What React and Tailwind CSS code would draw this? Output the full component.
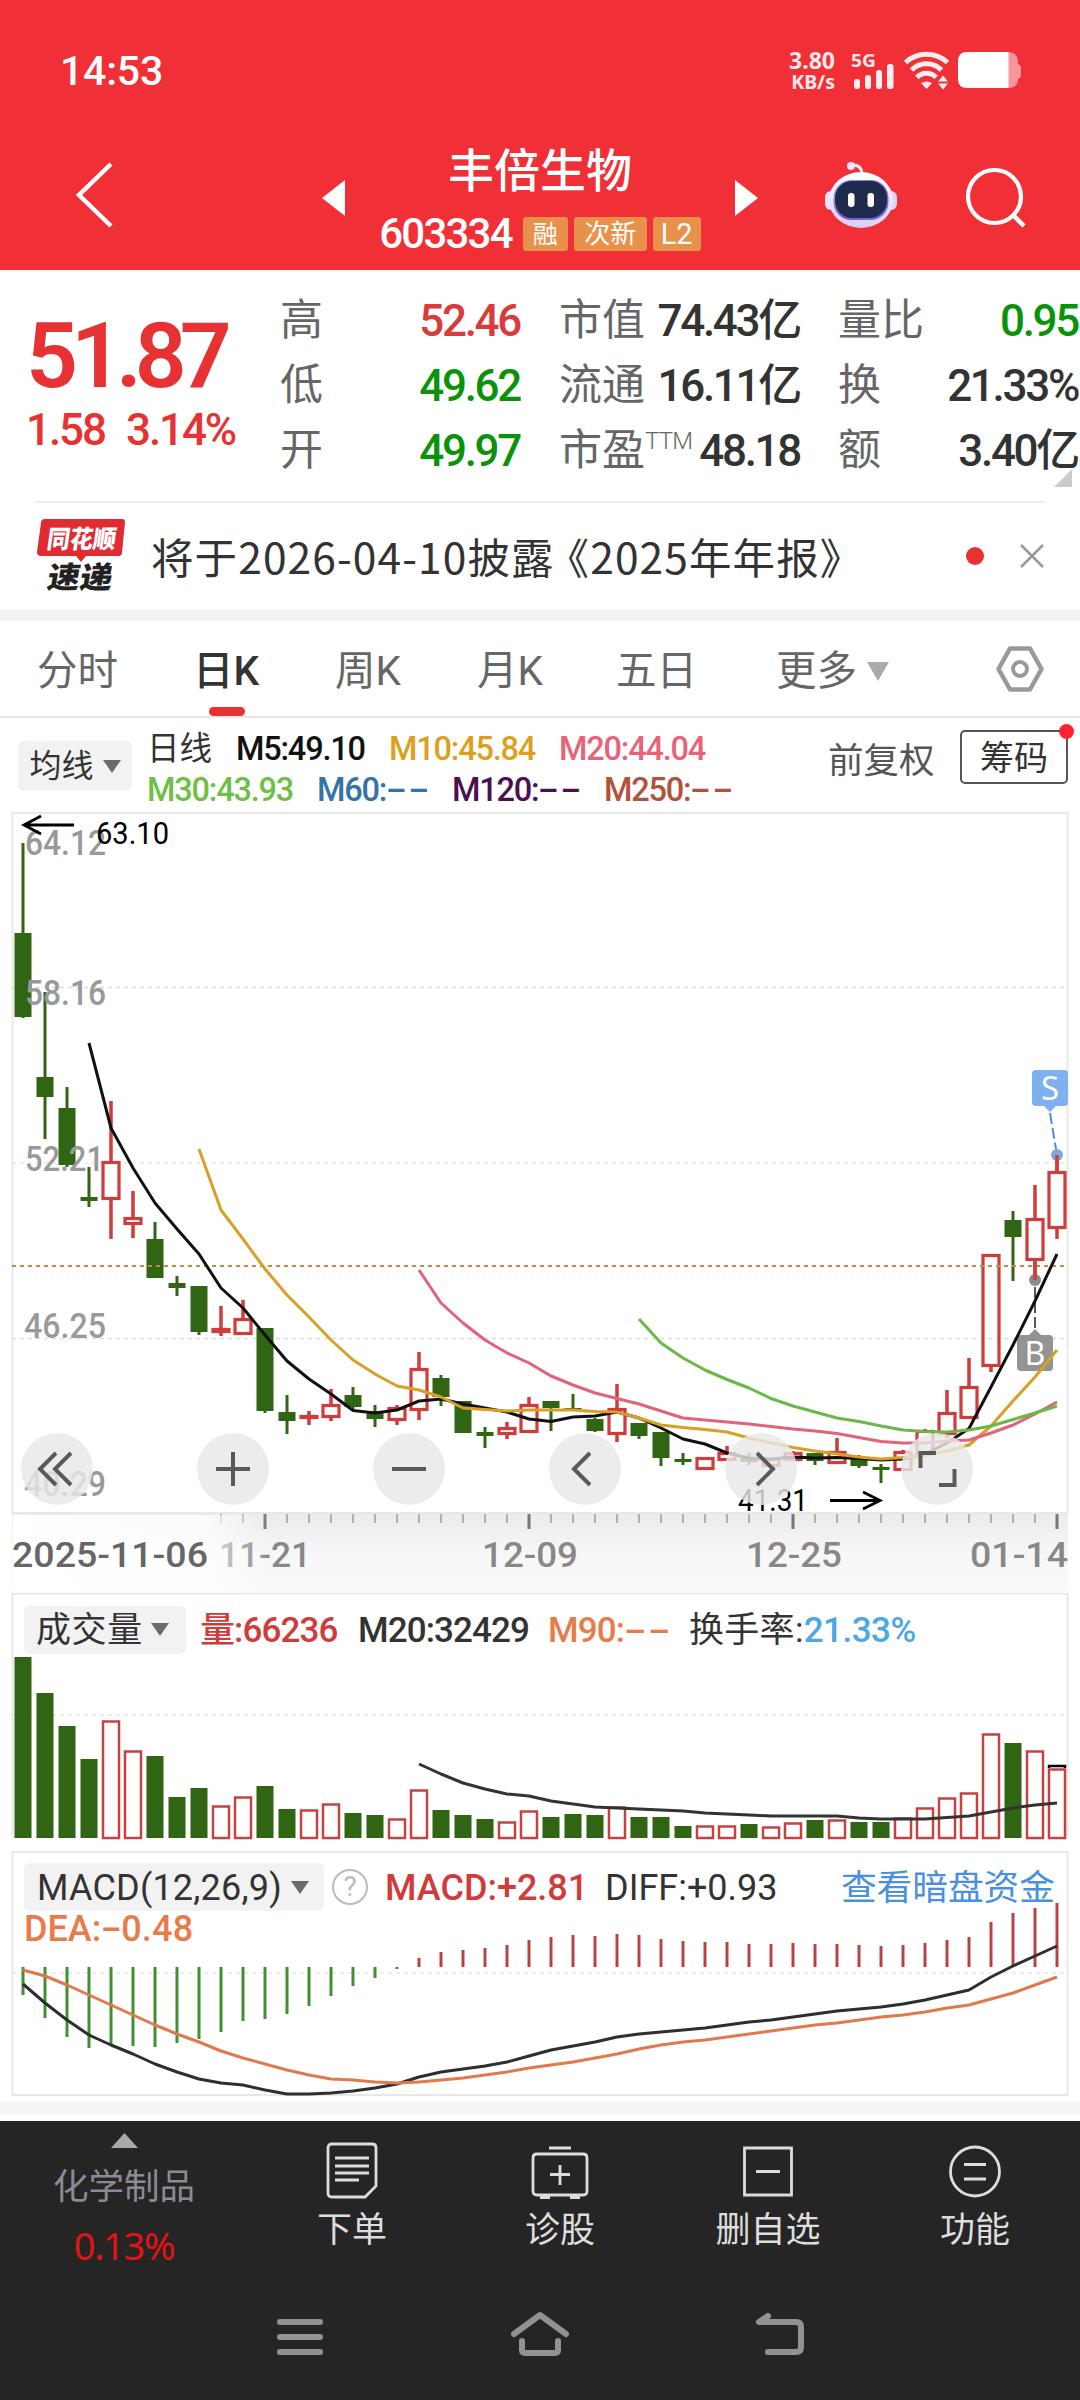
import React from 'react';

// one entry per trading day: [body top, body bottom, high, low, up?]
const candles = [
    [933, 1017, 843, 1018, 0], [1077, 1097, 992, 1139, 0], [1108, 1165, 1087, 1167, 0], [1197, 1201, 1167, 1207, 0],
    [1161, 1200, 1101, 1239, 1], [1217, 1225, 1191, 1238, 1], [1239, 1278, 1222, 1278, 0], [1283, 1288, 1276, 1296, 0],
    [1286, 1332, 1286, 1335, 0], [1328, 1333, 1306, 1336, 1], [1318, 1335, 1300, 1335, 1], [1328, 1411, 1328, 1413, 0],
    [1412, 1421, 1395, 1434, 0], [1415, 1419, 1411, 1425, 1], [1404, 1418, 1389, 1421, 1], [1395, 1407, 1387, 1409, 0],
    [1411, 1419, 1405, 1427, 0], [1407, 1421, 1405, 1425, 1], [1368, 1411, 1352, 1420, 1], [1378, 1397, 1375, 1406, 0],
    [1401, 1433, 1401, 1433, 0], [1432, 1436, 1427, 1448, 0], [1427, 1435, 1422, 1439, 1], [1404, 1433, 1397, 1433, 1],
    [1401, 1408, 1401, 1431, 0], [1408, 1410, 1394, 1411, 0], [1419, 1431, 1418, 1432, 0], [1408, 1435, 1384, 1442, 1],
    [1423, 1436, 1423, 1439, 0], [1432, 1458, 1432, 1466, 0], [1459, 1462, 1453, 1465, 0], [1457, 1470, 1457, 1470, 1],
    [1452, 1461, 1446, 1461, 1], [1457, 1462, 1453, 1465, 0], [1458, 1467, 1458, 1467, 1], [1452, 1461, 1451, 1461, 1],
    [1453, 1461, 1453, 1465, 0], [1451, 1464, 1438, 1464, 1], [1458, 1466, 1455, 1468, 0], [1467, 1470, 1464, 1483, 0],
    [1451, 1471, 1450, 1471, 1], [1430, 1454, 1429, 1454, 1], [1412, 1435, 1390, 1438, 1], [1386, 1419, 1358, 1419, 1],
    [1254, 1367, 1254, 1372, 1], [1220, 1237, 1211, 1281, 0], [1218, 1261, 1185, 1280, 1], [1171, 1229, 1155, 1239, 1],
];

const volumes = [
    1657, 1693, 1726, 1759, 1720, 1750, 1756, 1797, 1788, 1805, 1796, 1786, 1809, 1809, 1803, 1813,
    1815, 1818, 1789, 1810, 1815, 1819, 1821, 1810, 1817, 1814, 1815, 1806, 1817, 1817, 1826, 1825,
    1825, 1824, 1826, 1822, 1820, 1819, 1822, 1822, 1817, 1807, 1797, 1792, 1733, 1743, 1750, 1768,
];

const macd = [
    1995, 2018, 2037, 2048, 2045, 2046, 2047, 2043, 2039, 2032, 2021, 2019, 2014, 2006, 1996, 1986,
    1978, 1969, 1958, 1952, 1950, 1948, 1945, 1940, 1937, 1935, 1936, 1934, 1935, 1939, 1941, 1942,
    1942, 1944, 1944, 1943, 1944, 1944, 1945, 1946, 1945, 1943, 1940, 1937, 1922, 1913, 1908, 1903,
];

const ma5 = [1043, 1128, 1168, 1203, 1229, 1254, 1288, 1308, 1335, 1361, 1379, 1394, 1410.5, 1413, 1410, 1401, 1399, 1404, 1408, 1412, 1419, 1421.5, 1417, 1416, 1412, 1418, 1428, 1439, 1444, 1453, 1458, 1459, 1457, 1458, 1457.5, 1458.5, 1460, 1459, 1454, 1443, 1428.5, 1387, 1345, 1301, 1254];
const ma10 = [1149, 1210, 1239, 1269, 1295, 1317, 1340, 1360, 1374, 1386, 1390, 1397, 1408, 1409.5, 1411, 1410, 1410, 1410, 1411.5, 1412, 1418, 1425, 1427.5, 1429.5, 1432, 1438, 1443, 1447.5, 1451, 1454, 1457, 1459, 1457.5, 1455.5, 1451, 1445, 1426, 1401, 1377, 1350];
const ma20 = [1270, 1303, 1323, 1340, 1353, 1363, 1376, 1385, 1393, 1398.5, 1404, 1411, 1418, 1420, 1422, 1424, 1426.5, 1429, 1431, 1433.5, 1437.5, 1441.5, 1443, 1443, 1441, 1440, 1433, 1425, 1414, 1402];
const ma30 = [1319, 1343, 1358, 1370, 1379.5, 1388, 1398.5, 1406, 1412, 1418, 1421.5, 1426, 1430, 1431.5, 1432, 1430, 1426, 1419.5, 1413, 1406];
const volMa = [1764, 1774, 1783, 1789, 1794, 1796, 1801, 1804, 1807, 1808, 1809, 1810, 1811, 1813, 1814, 1815, 1816, 1816, 1816, 1816, 1818, 1819, 1819, 1819, 1817.5, 1816, 1812, 1808, 1805, 1803];
const diff = [1984, 2003, 2020, 2035, 2045, 2054, 2064, 2072, 2079, 2083, 2085, 2090, 2094, 2094, 2093, 2091, 2088, 2084, 2077, 2072, 2069, 2066, 2062, 2056, 2050, 2046, 2042, 2037, 2034, 2032, 2030, 2028, 2025, 2022, 2020, 2017, 2014, 2011, 2009, 2007, 2004, 2000, 1995, 1990, 1977, 1966, 1956, 1946];
const dea = [1970, 1976, 1985, 1995, 2005, 2015, 2025, 2034, 2042, 2051, 2058, 2064, 2070, 2075, 2079, 2080, 2082, 2083, 2082, 2080, 2078, 2075, 2072, 2068, 2065, 2062, 2058, 2054, 2049, 2045, 2042, 2040, 2037, 2034, 2031, 2028, 2025, 2023, 2020, 2017, 2015, 2012, 2008, 2005, 1999, 1993, 1985, 1977];

const GREEN = '#306613';
const RED = '#d13b3b';

const px = (i) => 23 + 22 * i;

function Line({ data, start = 0, color }) {
    const points = data.map((y, i) => `${px(start + i)},${y}`).join(' ');
    return <polyline points={points} fill="none" stroke={color} strokeWidth="3" strokeLinejoin="round" />;
}

function Label({ x, y, w, size = 35, fill = '#999', weight = 500, children }) {
    return (
        <text x={x} y={y} textLength={w} lengthAdjust="spacingAndGlyphs" fontSize={size} fontWeight={weight} fill={fill}>
            {children}
        </text>
    );
}

function Grid({ y, color = '#e6e6e6' }) {
    return <line x1="12" x2="1067" y1={y} y2={y} stroke={color} strokeWidth="1.5" strokeDasharray="4 4" />;
}

function Caret({ className = 'text-[#6b6b6b]' }) {
    return (
        <svg width="18" height="13" viewBox="0 0 18 13" className={className}>
            <path d="M0 0h18l-9 13z" fill="currentColor" />
        </svg>
    );
}

// wide dashes for averages that have no value yet
function Empty() {
    return <span className="inline-block origin-left scale-x-[1.9] tracking-[0.8px]">--</span>;
}

function RoundButton({ x, children }) {
    return (
        <g>
            <circle cx={x} cy="1469" r="36" fill="#e8e8e8" fillOpacity="0.82" />
            <g fill="none" stroke="#5a5a5a" strokeWidth="4">{children}</g>
        </g>
    );
}

function StatusBar() {
    return (
        <div className="flex h-[142px] items-center justify-between pl-[60px] pr-[59px]">
            <span className="text-[41px] font-medium leading-none tracking-[-0.2px]">14:53</span>
            <div className="flex items-center">
                <div className="mr-[14px] flex flex-col items-end font-['Noto_Sans',sans-serif] font-bold leading-[22px] text-white/90">
                    <span className="text-[23px]">3.80</span>
                    <span className="text-[19.500px]">KB/s</span>
                </div>
                <svg width="175" height="48" viewBox="848 46 175 48" className="-mr-[3px] -mt-[4px]">
                    <text x="850" y="67.500" fontSize="18.500" fontWeight="700" textLength="25" lengthAdjust="spacingAndGlyphs" fill="#fff" fillOpacity=".92" className="font-['Noto_Sans',sans-serif]">5G</text>
                    <g fill="#ffeef0">
                        <rect x="853" y="80" width="6" height="10" rx="2.500" />
                        <rect x="864" y="76" width="6" height="14" rx="2.500" />
                        <rect x="875" y="71" width="6" height="19" rx="2.500" />
                        <rect x="886" y="65" width="6.500" height="25" rx="2.500" />
                    </g>
                    <g fill="none" stroke="#ffeef0" strokeWidth="5">
                        <path d="M904.500 63.500a31 31 0 0 1 42 0" />
                        <path d="M910.500 71a21 21 0 0 1 30 0" />
                        <path d="M916 78.500a13 13 0 0 1 19 0" />
                    </g>
                    <path d="M920 84q5.500-3 11 0l-5.500 6zM937 82.500l5-6 5 6zM937 84.500h10l-5 6z" fill="#ffeef0" />
                    <path d="M1003 53h4q10 0 10 10v2q3 1 3 4v7q0 3-3 4v0q0 9-10 9h-4z" fill="#fff" fillOpacity=".5" />
                    <path d="M966 53h41.500v36H966q-9 0-9-9V62q0-9 9-9z" fill="#fff" />
                </svg>
            </div>
        </div>
    );
}

function Robot() {
    return (
        <svg width="76" height="72" viewBox="823 158 76 72">
            <defs>
                <linearGradient id="face" x1="0" y1="0" x2="0" y2="1">
                    <stop offset="0" stopColor="#fff" />
                    <stop offset="1" stopColor="#d6d0f4" />
                </linearGradient>
                <linearGradient id="rim" x1="0" y1="0" x2="1" y2="1">
                    <stop offset="0" stopColor="#7fc7d8" />
                    <stop offset=".5" stopColor="#8a4fd0" />
                    <stop offset="1" stopColor="#6a6fe8" />
                </linearGradient>
            </defs>
            <path d="M862 173q-1-8-9-8" fill="none" stroke="#f3e9fb" strokeWidth="3" />
            <circle cx="851" cy="166" r="4" fill="#f6e6f4" />
            <rect x="825" y="191" width="12" height="19" rx="6" fill="#e2e4fa" />
            <rect x="885" y="191" width="12" height="19" rx="6" fill="#dcd6f6" />
            <ellipse cx="861" cy="200" rx="32" ry="28" fill="url(#face)" />
            <rect x="833.500" y="180" width="55" height="40" rx="18" fill="url(#rim)" />
            <rect x="835" y="181" width="52" height="37" rx="17" fill="#202a4c" />
            <rect x="848" y="193" width="6.500" height="14" rx="3" fill="#fff" />
            <rect x="867.500" y="193" width="6.500" height="14" rx="3" fill="#fff" />
        </svg>
    );
}

function Header() {
    return (
        <header className="h-[270px] bg-[#f12f37] text-white">
            <StatusBar />
            <div className="flex h-[128px] items-start pl-[74px]">
                <svg width="42" height="72" viewBox="74 159 42 72" className="mt-[17px]">
                    <path d="M111 164L79 195l32 31" fill="none" stroke="#fff" strokeWidth="4.500" />
                </svg>
                <svg width="23" height="36" viewBox="0 0 23 36" className="ml-[206px] mt-[38px]">
                    <path d="M23 0v36L0 18z" fill="#fff" />
                </svg>
                <div className="flex w-[390px] flex-col items-center">
                    <h1 className="mt-[2px] text-[46px] font-medium leading-[54px]">丰倍生物</h1>
                    <div className="mt-[17px] flex items-center leading-none">
                        <span className="mr-[11px] text-[42px] font-medium leading-[38px] tracking-[-1.8px]">603334</span>
                        <span className="mr-[6px] flex h-[34px] w-[45px] items-center justify-center rounded-[3px] bg-[#e8914b] text-[25px]">融</span>
                        <span className="mr-[6px] flex h-[34px] w-[73px] items-center justify-center rounded-[3px] bg-[#e8914b] text-[26px]">次新</span>
                        <span className="flex h-[34px] w-[48px] items-center justify-center rounded-[3px] bg-[#e8914b] text-[29px]">L2</span>
                    </div>
                </div>
                <svg width="23" height="36" viewBox="0 0 23 36" className="mt-[38px]">
                    <path d="M0 0v36l23-18z" fill="#fff" />
                </svg>
                <div className="ml-[65px] mt-[16px]"><Robot /></div>
                <svg width="66" height="66" viewBox="963 164 66 66" className="ml-[64px] mt-[22px]">
                    <circle cx="994.500" cy="196.500" r="26.500" fill="none" stroke="#fff" strokeWidth="4.200" />
                    <path d="M1013 215l11 11" stroke="#fff" strokeWidth="4.500" />
                </svg>
            </div>
        </header>
    );
}

function Stat({ label, value, sup, className = '' }) {
    return (
        <div className="flex h-[65px] items-center justify-between">
            <span className="flex text-[43px] text-[#666]">
                {label}
                {sup && <sup className="top-0 mt-[11px] text-[24px] font-light leading-none tracking-[-0.8px]">{sup}</sup>}
            </span>
            <span className={`text-[44px] font-medium tracking-[-2.3px] ${className}`}>{value}</span>
        </div>
    );
}

function Quote() {
    return (
        <section className="relative flex h-[231px] pt-[18px]">
            <div className="w-[280px] pl-[26px] text-[#e63232]">
                <div className="mt-[20px] text-[91px] font-semibold leading-[96px] tracking-[-7px]">51.87</div>
                <div className="flex text-[44px] font-medium leading-[52px] tracking-[-2.1px]">
                    <span className="w-[100px]">1.58</span>
                    <span>3.14%</span>
                </div>
            </div>
            <div className="w-[240px]">
                <Stat label="高" value="52.46" className="text-[#d93a3a]" />
                <Stat label="低" value="49.62" className="text-[#0a930a]" />
                <Stat label="开" value="49.97" className="text-[#0a930a]" />
            </div>
            <div className="ml-[39px] w-[241px]">
                <Stat label="市值" value="74.43亿" className="text-[#333]" />
                <Stat label="流通" value="16.11亿" className="text-[#333]" />
                <Stat label="市盈" sup="TTM" value="48.18" className="text-[#333]" />
            </div>
            <div className="ml-[38px] w-[240px]">
                <Stat label="量比" value="0.95" className="text-[#0a930a]" />
                <Stat label="换" value="21.33%" className="text-[#333]" />
                <Stat label="额" value="3.40亿" className="text-[#333]" />
            </div>
            <svg width="18" height="18" viewBox="0 0 18 18" className="absolute bottom-[14px] right-[8px]">
                <path d="M18 0v18H0z" fill="#ccc" />
            </svg>
        </section>
    );
}

function News() {
    return (
        <section className="mx-9 flex h-[108px] items-center border-t-2 border-[#eee]">
            <svg width="90" height="86" viewBox="36 512 90 86">
                <path d="M45 518h77q3 0 3 3l-3 31q0 3-4 3H86l-5 6-5-6H41q-4 0-4-4l4-29q0-4 4-4z" fill="#e02b32" />
                <text x="0" y="0" transform="translate(46 547) skewX(-8)" fontSize="25" fontWeight="900" textLength="69" lengthAdjust="spacingAndGlyphs" fill="#fff">同花顺</text>
                <text x="0" y="0" transform="translate(46 587) skewX(-10)" fontSize="30" fontWeight="900" textLength="65" lengthAdjust="spacingAndGlyphs" fill="#222">速递</text>
            </svg>
            <p className="ml-[25px] flex-1 whitespace-nowrap font-['Noto_Sans_CJK_SC',sans-serif] text-[42.500px] leading-none tracking-[1.1px] text-[#333]">
                将于2026-04-10披露<span className="-ml-[8px]">《</span>2025年年报》
            </p>
            <span className="mr-[36px] size-[18px] rounded-full bg-[#e63232]"></span>
            <svg width="24" height="24" viewBox="0 0 24 24">
                <path d="M1 1l22 22M23 1L1 23" stroke="#999" strokeWidth="2.500" />
            </svg>
        </section>
    );
}

function Tabs() {
    return (
        <nav className="flex h-[97px] items-center border-b-2 border-[#e6e6e6] pl-[37px] text-[40.500px] leading-none text-[#666]">
            <span className="w-[156px] pt-[5px]">分时</span>
            <span className="relative flex h-full w-[142px] items-center pt-[5px] font-medium text-[#333]">
                日K
                <i className="absolute bottom-0 left-[16px] h-[9px] w-[36px] rounded-[5px] bg-[#e63232]"></i>
            </span>
            <span className="w-[142px] pt-[5px]">周K</span>
            <span className="w-[139px] pt-[5px]">月K</span>
            <span className="w-[160px] pt-[5px]">五日</span>
            <span className="flex w-[219px] items-center pt-[5px]">
                更多
                <svg width="22" height="19" viewBox="0 0 22 19" className="ml-[10px]">
                    <path d="M0 0h22L11 19z" fill="#aaa" />
                </svg>
            </span>
            <svg width="50" height="48" viewBox="0 0 50 48" fill="none" stroke="#999">
                <path d="M15 3.500h20L46.500 24 35 44.500H15L3.500 24z" strokeWidth="4.500" strokeLinejoin="round" />
                <circle cx="25" cy="24" r="7" strokeWidth="4" />
            </svg>
        </nav>
    );
}

function Averages() {
    return (
        <div className="flex h-[94px] pl-[18px] pr-[12px]">
            <button className="mt-[23px] flex h-[50px] w-[114px] items-center justify-center gap-[9px] rounded-[6px] bg-[#f2f2f2] text-[32px] text-[#333]">
                均线 <Caret />
            </button>
            <div className="ml-[15px] mt-[11px] w-[665px] whitespace-nowrap text-[32.500px] font-medium leading-[41px] tracking-[-1.200px]">
                <div className="flex">
                    <span className="w-[89px] font-normal tracking-normal text-[#333]">日线</span>
                    <span className="w-[153px] text-[#111]">M5:49.10</span>
                    <span className="w-[170px] text-[#dc9f1e]">M10:45.84</span>
                    <span className="text-[#e8637a]">M20:44.04</span>
                </div>
                <div className="flex">
                    <span className="w-[170px] text-[#6dbf47]">M30:43.93</span>
                    <span className="w-[135px] text-[#3373a8]">M60:<Empty /></span>
                    <span className="w-[152px] text-[#4a1050]">M120:<Empty /></span>
                    <span className="text-[#b0523c]">M250:<Empty /></span>
                </div>
            </div>
            <span className="ml-[16px] mt-[24px] text-[35.500px] leading-[38px] text-[#555]">前复权</span>
            <div className="relative ml-auto mt-[12px] flex h-[54px] w-[108px] items-center justify-center rounded-[5px] border-2 border-[#555] pt-[3px] text-[34px] text-[#333]">
                筹码
                <i className="absolute -right-[8px] -top-[8px] size-[15px] rounded-full bg-[#ff2233]"></i>
            </div>
        </div>
    );
}

function PriceChart() {
    return (
        <svg width="1080" height="781" viewBox="0 812 1080 781" className="block">
            <defs>
                <linearGradient id="axisY" x1="0" y1="0" x2="0" y2="1">
                    <stop offset="0" stopColor="#ebebeb" />
                    <stop offset=".5" stopColor="#f7f7f7" />
                    <stop offset="1" stopColor="#fafafa" />
                </linearGradient>
                <linearGradient id="axisX" gradientUnits="userSpaceOnUse" x1="12" y1="0" x2="270" y2="0">
                    <stop offset="0" stopColor="#fff" />
                    <stop offset=".75" stopColor="#fff" stopOpacity=".75" />
                    <stop offset="1" stopColor="#fff" stopOpacity="0" />
                </linearGradient>
            </defs>
            <rect x="12" y="1514" width="1056" height="79" fill="url(#axisY)" />
            <rect x="12.500" y="813" width="1055" height="700" fill="none" stroke="#e8e8e8" strokeWidth="2" />
            <Grid y={987.5} color="#dcdcdc" />
            <Grid y={1163} />
            <Grid y={1338.5} color="#dcdcdc" />

            {candles.map(([top, bottom, high, low, up], i) => (
                up ? (
                    <g key={i} stroke={RED} fill="none">
                        <path d={`M${px(i)} ${high}V${top}M${px(i)} ${bottom}V${low}`} strokeWidth="3.500" />
                        <rect x={px(i) - 8} y={top + 1.5} width="16" height={Math.max(bottom - top - 3, 1)} strokeWidth="3.200" />
                    </g>
                ) : (
                    <g key={i} fill={GREEN}>
                        <rect x={px(i) - 1.5} y={high} width="3" height={low - high} />
                        <rect x={px(i) - 8.5} y={top} width="17" height={bottom - top} />
                    </g>
                )
            ))}
            <line x1="12" x2="1067" y1="1266" y2="1266" stroke="#bd8a4a" strokeWidth="2" strokeDasharray="4 4" />

            <Label x="25" y="855" w="81">64.12</Label>
            <Label x="25" y="1005" w="81">58.16</Label>
            <Label x="25" y="1171" w="79">52.21</Label>
            <Label x="24" y="1338" w="82">46.25</Label>
            <Label x="24" y="1496" w="82">40.29</Label>
            <Label x="96" y="844" w="73" size={31} weight={400} fill="#000">63.10</Label>
            <Label x="738" y="1511" w="70" size={31} weight={400} fill="#000">41.31</Label>
            <g fill="none" stroke="#000" strokeWidth="2.800">
                <path d="M74 825H24M41 816l-17 9 17 9" />
                <path d="M830 1500.500h50M863 1492l17 8.500-17 8.500" />
            </g>

            {/* sell marker */}
            <path d="M1036 1070h28q4 0 4 4v28q0 4-4 4h-8l-6 6-6-6h-8q-4 0-4-4v-28q0-4 4-4z" fill="#7db1f0" />
            <line x1="1050" y1="1113" x2="1056.500" y2="1152" stroke="#4a8fd8" strokeWidth="2" strokeDasharray="11 4" />
            <circle cx="1057" cy="1155" r="6" fill="#7ea9e0" />
            <path d="M1057 1155v16" stroke={RED} strokeWidth="3.500" />
            <text x="1050" y="1100" fontSize="33" textAnchor="middle" fill="#fff" className="font-['Noto_Sans',sans-serif]">S</text>
            {/* buy marker */}
            <circle cx="1035" cy="1280" r="6" fill="#8c8c8c" />
            <path d="M1035 1262v18" stroke={RED} strokeWidth="3.500" />
            <line x1="1035" y1="1287" x2="1035" y2="1330" stroke="#555" strokeWidth="2" strokeDasharray="11 4" />
            <path d="M1021 1335h8l6-6 6 6h8q4 0 4 4v28q0 4-4 4h-28q-4 0-4-4v-28q0-4 4-4z" fill="#939393" />
            <text x="1035" y="1365" fontSize="32" textAnchor="middle" fill="#fff" className="font-['Noto_Sans',sans-serif]">B</text>

            <Line data={ma5} start={3} color="#111" />
            <Line data={ma10} start={8} color="#d99f27" />
            <Line data={ma20} start={18} color="#e0637a" />
            <Line data={ma30} start={28} color="#6bb84a" />

            <RoundButton x={57}><path d="M56 1453l-16 16 16 16M71 1453l-16 16 16 16" /></RoundButton>
            <RoundButton x={233}><path d="M216 1469h34M233 1452v34" /></RoundButton>
            <RoundButton x={409}><path d="M392 1469h34" /></RoundButton>
            <RoundButton x={585}><path d="M590 1453l-16 16 16 16" /></RoundButton>
            <RoundButton x={761}><path d="M757 1453l16 16-16 16" /></RoundButton>
            <RoundButton x={937}><path d="M920.500 1468v-15H936M939 1485h15.500v-16" /></RoundButton>

            {candles.map((c, i) => {
                const major = (i - 11) % 12 === 0;
                return i > 8 && (
                    <line key={i} x1={px(i)} x2={px(i)} y1="1514" y2={major ? 1529 : 1523} stroke={major ? '#777' : '#999'} strokeWidth={major ? 3 : 1.5} />
                );
            })}
            <Label x="219" y="1567" w="92" fill="#888">11-21</Label>
            <Label x="482" y="1567" w="96" fill="#888">12-09</Label>
            <Label x="746" y="1567" w="96" fill="#888">12-25</Label>
            <Label x="970" y="1567" w="98" fill="#888">01-14</Label>
            <rect x="13" y="1515" width="257" height="78" fill="url(#axisX)" />
            <Label x="12" y="1567" w="196" fill="#666">2025-11-06</Label>
        </svg>
    );
}

function VolumeChart() {
    return (
        <section className="relative h-[258px]">
            <svg width="1080" height="258" viewBox="0 1593 1080 258" className="absolute inset-0">
                <path d="M12.500 1838V1593.500h1055V1838" fill="none" stroke="#e8e8e8" strokeWidth="2" />
                <Grid y={1715} />
                {volumes.map((top, i) => (
                    candles[i][4]
                        ? <rect key={i} x={px(i) - 8} y={top + 1.5} width="16" height={1836.5 - top} fill="none" stroke="#c54242" strokeWidth="2.500" />
                        : <rect key={i} x={px(i) - 8.5} y={top} width="17" height={1838 - top} fill={GREEN} />
                ))}
                <path d="M1049 1768v-2h16v2" fill="none" stroke="#000" strokeWidth="2.500" />
                <Line data={volMa} start={18} color="#333" />
            </svg>
            <div className="relative flex items-center whitespace-nowrap pl-[24px] pt-[11px] text-[35px] font-medium leading-[48px] tracking-[-0.9px]">
                <button className="mr-[14px] flex h-[48px] w-[162px] items-center gap-[8px] rounded-[6px] bg-[#f2f2f2] pl-[12px] font-normal tracking-[0.6px] text-[#333]">
                    <span className="pt-[3px]">成交量</span> <Caret />
                </button>
                <span className="w-[158px] pt-[3px] text-[#d13b3b]">量:66236</span>
                <span className="w-[190px] pt-[3px] text-[#333]">M20:32429</span>
                <span className="w-[141px] pt-[3px] text-[#e87b4a]">M90:<Empty /></span>
                <span className="pt-[3px] font-normal tracking-[0.3px] text-[#333]">换手率:</span>
                <span className="pt-[3px] tracking-[-0.5px] text-[#4aa8e2]">21.33%</span>
            </div>
        </section>
    );
}

function MacdChart() {
    return (
        <section className="relative h-[251px]">
            <svg width="1080" height="251" viewBox="0 1851 1080 251" className="absolute inset-0">
                <rect x="12.500" y="1852" width="1055" height="243" fill="none" stroke="#e8e8e8" strokeWidth="2" />
                <Grid y={1973} />
                {macd.map((y, i) => (
                    <line key={i} x1={px(i)} x2={px(i)} y1="1967" y2={y} stroke={y > 1967 ? '#438f33' : '#b94343'} strokeWidth="3" />
                ))}
                <Line data={diff} color="#2e2e2e" />
                <Line data={dea} color="#e07a4e" />
            </svg>
            <div className="relative flex items-center whitespace-nowrap pl-[24px] pr-[25px] pt-[11px] text-[34px] leading-[48px]">
                <button className="flex h-[48px] w-[300px] items-center justify-between rounded-[6px] bg-[#f2f2f2] pl-[13px] pr-[15px] text-[36px] tracking-[0.2px] text-[#333]">
                    <span className="pt-[2px]">MACD(12,26,9)</span> <Caret />
                </button>
                <span className="ml-[8px] mr-[17px] flex size-[36px] items-center justify-center rounded-full border-[2.500px] border-[#bbb] text-[28px] text-[#bbb]">?</span>
                <span className="w-[220px] pt-[2px] text-[36px] font-medium text-[#d13b3b]">MACD:+2.81</span>
                <span className="pt-[2px] text-[36px] text-[#333]">DIFF:+0.93</span>
                <a className="ml-auto pt-[2px] text-[35.700px] text-[#4a90dc]">查看暗盘资金</a>
            </div>
            <div className="relative pl-[24px] text-[36px] font-medium leading-[35px] text-[#e87b4a]">
                DEA:<span className="inline-block w-[20px] origin-left scale-x-[1.7]">-</span><span className="tracking-[0.2px]">0.48</span>
            </div>
        </section>
    );
}

function NavItem({ label, className, children }) {
    return (
        <div className={`flex flex-col items-center ${className}`}>
            <svg width="60" height="60" viewBox="0 0 60 60" fill="none" stroke="#ddd" strokeWidth="2.800" className="mt-[20px]">
                {children}
            </svg>
            <span className="mt-[10px] text-[35px] leading-[40px] text-[#ddd]">{label}</span>
        </div>
    );
}

function BottomBar() {
    return (
        <footer className="h-[279px] bg-[#252525]">
            <div className="flex h-[160px]">
                <div className="flex w-[248px] flex-col items-center">
                    <svg width="27" height="15" viewBox="0 0 27 15" className="mt-[12px]">
                        <path d="M13.500 0L27 15H0z" fill="#aaa" />
                    </svg>
                    <span className="mt-[17px] text-[35.500px] leading-[44px] text-[#8b8b93]">化学制品</span>
                    <span className="mt-[11px] font-['Noto_Sans',sans-serif] text-[38px] leading-[50px] tracking-[-1.300px] text-[#e01414]">0.13%</span>
                </div>
                <NavItem label="下单" className="w-[208px]">
                    <path d="M10 3h40q4 0 4 4v38L43 56H10q-4 0-4-4V7q0-4 4-4zM13 17h34M13 25h34M13 32h34M13 39h24" />
                </NavItem>
                <NavItem label="诊股" className="w-[208px]">
                    <path d="M7 13h46q4 0 4 4v33q0 4-4 4H7q-4 0-4-4V17q0-4 4-4zM19 7h22M20 33.500h20M30 24v20" />
                    <path d="M10 56h10M40 56h10" strokeWidth="4" />
                </NavItem>
                <NavItem label="删自选" className="w-[208px]">
                    <path d="M6.500 7h47v47h-47zM18 30.500h24" />
                </NavItem>
                <NavItem label="功能" className="w-[206px]">
                    <circle cx="30" cy="30.500" r="24.500" />
                    <path d="M19 23.500h22M19 38h22" />
                </NavItem>
            </div>
            <div className="flex items-center pl-[277px] pt-[29px]">
                <svg width="46" height="48" viewBox="277 2310 46 48" stroke="#929292" strokeWidth="6" strokeLinecap="round">
                    <path d="M280 2322h40M280 2337h40M280 2352h40" />
                </svg>
                <svg width="62" height="48" viewBox="509 2310 62 48" fill="none" stroke="#929292" strokeWidth="6" strokeLinecap="round" strokeLinejoin="round" className="ml-[186px]">
                    <path d="M514 2334l26-19 26 19M522 2341v9q0 3 4 3h28q4 0 4-3v-9" />
                </svg>
                <svg width="52" height="48" viewBox="754 2310 52 48" fill="none" stroke="#929292" strokeWidth="6" strokeLinecap="round" strokeLinejoin="round" className="ml-[183px]">
                    <path d="M768 2316l-9 6h37q5 0 5 5v20q0 5-5 5h-28" />
                </svg>
            </div>
        </footer>
    );
}

function App() {
    return (
        <div className="h-[2400px] w-[1080px] overflow-hidden bg-white font-[Roboto,'Noto_Sans_CJK_SC',sans-serif]">
            <Header />
            <Quote />
            <News />
            <div className="h-[12px] bg-[#f4f4f4]"></div>
            <Tabs />
            <Averages />
            <PriceChart />
            <VolumeChart />
            <MacdChart />
            <div className="mb-[7px] h-[12px] bg-[#f4f4f4]"></div>
            <BottomBar />
        </div>
    );
}

export default App;
